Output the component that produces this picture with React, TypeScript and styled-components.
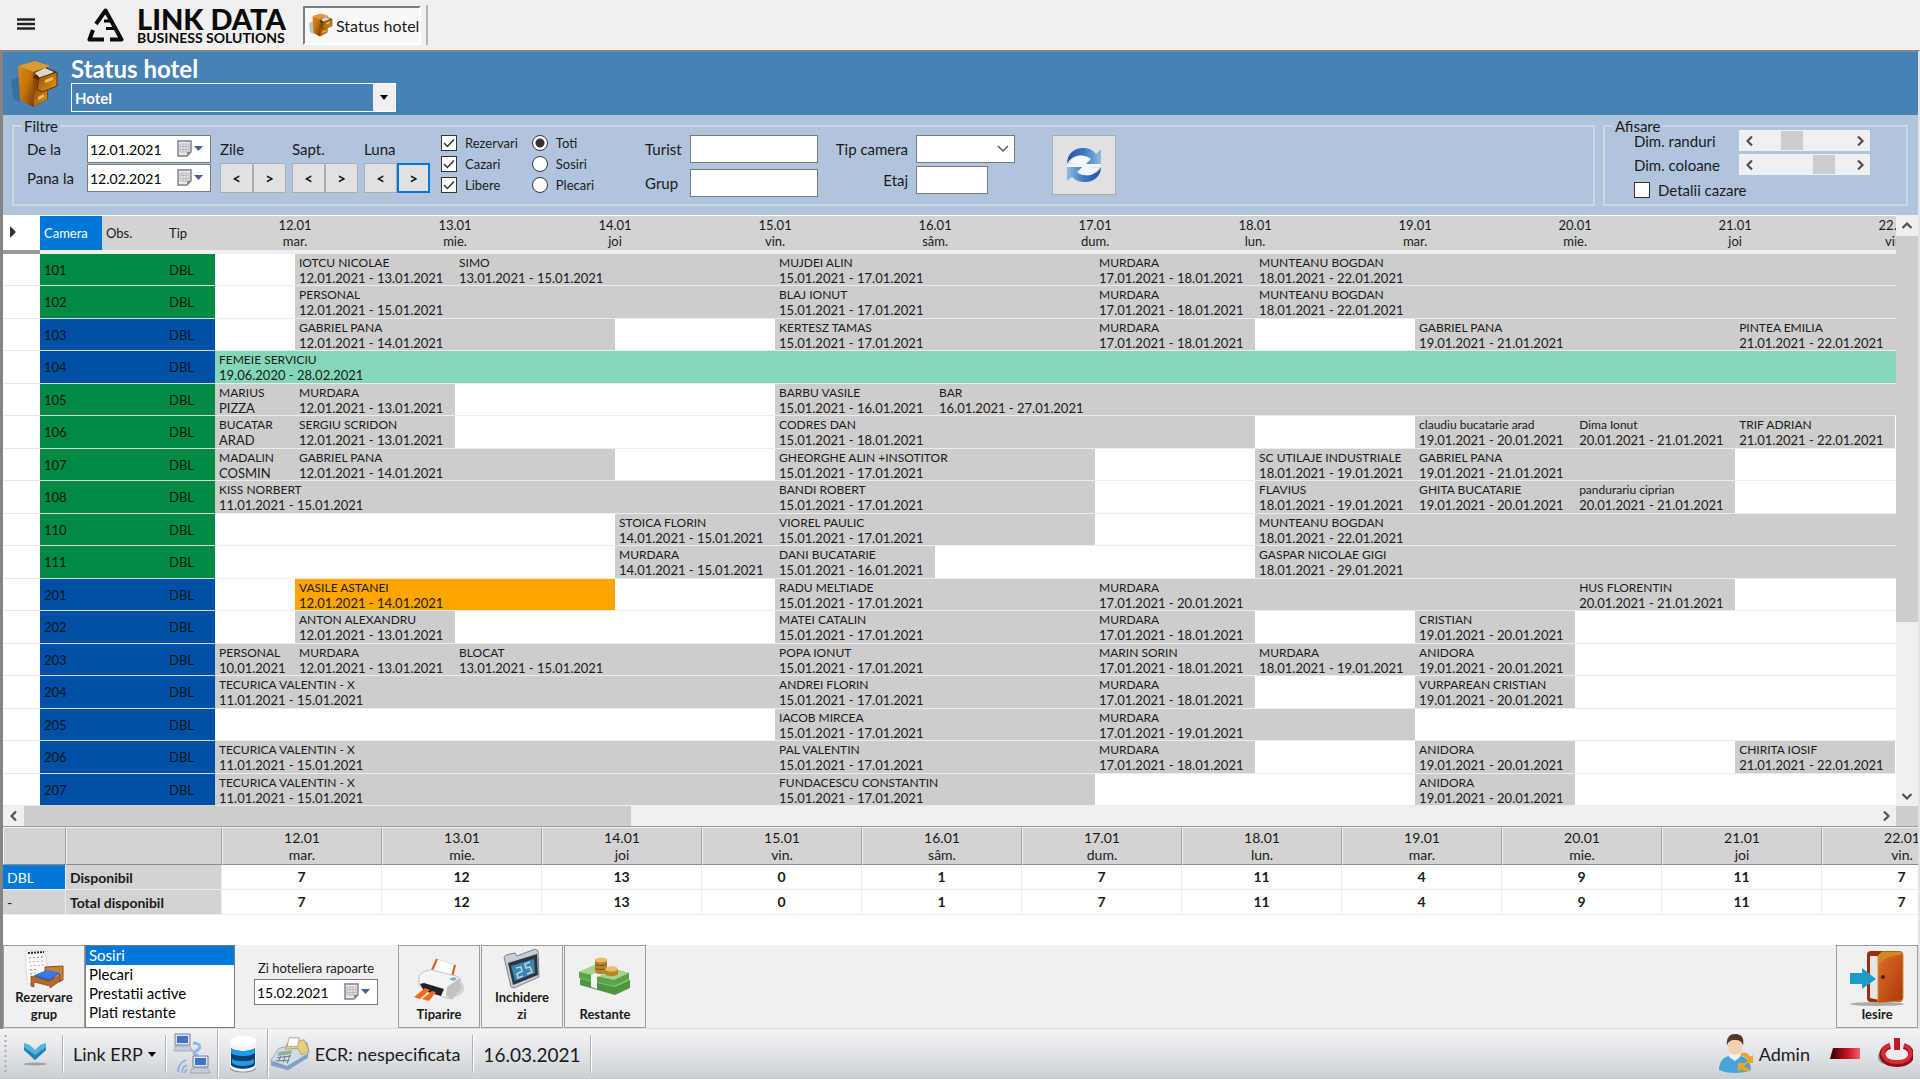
import React from "react";
import styled, { createGlobalStyle, css } from "styled-components";

const GlobalStyle = createGlobalStyle`
  * { box-sizing: border-box; }
  body { margin: 0; background: #f0f0f0; color: #1a1a1a; overflow: hidden; }
  body, button, input, select { font-family: Lato, "Open Sans", sans-serif; }
  button { padding: 0; color: inherit; cursor: pointer; }
  table { border-collapse: separate; border-spacing: 0; table-layout: fixed; }
  th, td { padding: 0; font-weight: 400; }
`;

/* ---------- frame ---------- */

const Page = styled.div`
  display: flex;
  flex-direction: column;
  min-height: 100vh;
`;

const TopBar = styled.header`
  display: flex;
  align-items: center;
  height: 50px;
  padding-left: 16px;
`;

const MenuButton = styled.button`
  width: 20px;
  height: 20px;
  border: 0;
  background: none;
`;

const Brand = styled.div`
  display: flex;
  align-items: center;
  gap: 13px;
  width: 204px;
  margin: 0 12px 0 51px;
  color: #0b0b0b;
`;

const BrandText = styled.div`
  display: flex;
  flex-direction: column;
  white-space: nowrap;
`;

const BrandName = styled.span`
  font-size: 29px;
  line-height: 25px;
  font-weight: 900;
`;

const BrandTagline = styled.span`
  font-size: 14px;
  line-height: 14px;
  font-weight: 700;
`;

const Tab = styled.button`
  display: flex;
  align-items: center;
  gap: 3px;
  height: 39px;
  padding: 0 0 0 4px;
  border: 2px solid;
  border-color: #7d7d7d #fff #fff #7d7d7d;
  background: #f8f8f8;
  font-size: 16px;
  white-space: nowrap;
`;

const TabDivider = styled.div`
  width: 2px;
  height: 40px;
  margin-left: 5px;
  background: #b4b4b4;
`;

const Workspace = styled.main`
  display: flex;
  flex: 1;
  flex-direction: column;
  border: solid #858585;
  border-width: 2px 0 0 3px;
  border-right: 2px solid #e3e3e3;
  background: #fff;
  min-width: 0;
`;

/* ---------- title band ---------- */

const TitleBand = styled.section`
  display: flex;
  gap: 12px;
  height: 63px;
  padding: 3px 0 0 8px;
  background: #4682b4;
  color: #fff;
  > svg { margin-top: 5px; }
`;

const TitleColumn = styled.div`
  display: flex;
  flex-direction: column;
`;

const Title = styled.h1`
  margin: 0;
  font-size: 24px;
  line-height: 28px;
  font-weight: 700;
`;

const Combo = styled.div`
  display: grid;
  grid-template-columns: 1fr 22px;
  width: 325px;
  height: 29px;
  border: 1px solid #fff;
`;

const ComboSelect = styled.select`
  grid-area: 1 / 1 / 2 / 3;
  padding: 0 3px;
  border: 0;
  border-radius: 0;
  appearance: none;
  background: transparent;
  color: #fff;
  font-size: 15px;
  font-weight: 700;
`;

const ComboArrow = styled.span`
  display: grid;
  grid-area: 1 / 2;
  place-items: center;
  background: #f0f0f0;
  color: #000;
  pointer-events: none;
`;

/* ---------- filters ---------- */

const FilterBand = styled.section`
  display: flex;
  gap: 8px;
  height: 100px;
  padding: 7px 10px 0 9px;
  background: #b0c4de;
  font-size: 15px;
`;

const Group = styled.fieldset<{ $grow?: boolean }>`
  flex: ${(p) => (p.$grow ? "1" : "0 0 305px")};
  min-width: 0;
  height: 84px;
  margin: 0;
  padding: 0;
  border: 2px solid #cdd7e2;
`;

const Legend = styled.legend`
  margin-left: 8px;
  padding: 0 2px;
  font-size: 15px;
  line-height: 8px;
`;

const FilterRow = styled.div`
  display: flex;
  align-items: flex-start;
  padding: 5px 0 0 13px;
  white-space: nowrap;
`;

const Stack = styled.div<{ $gap?: number; $ml?: number }>`
  display: flex;
  flex-direction: column;
  gap: ${(p) => p.$gap ?? 0}px;
  margin-left: ${(p) => p.$ml ?? 0}px;
`;

const DateField = styled.label<{ $label?: number }>`
  display: grid;
  grid-template-columns: ${(p) => p.$label ?? 60}px 124px;
  align-items: center;
`;

const DateBox = styled.span<{ $tall?: boolean }>`
  display: flex;
  align-items: center;
  width: 124px;
  height: ${(p) => (p.$tall ? 28 : 26)}px;
  padding-right: 6px;
  border: 1px solid #7a7a7a;
  background: #fff;
`;

const DateInput = styled.input`
  flex: 1;
  min-width: 0;
  height: 100%;
  padding: 0 2px;
  border: 0;
  background: none;
  font-size: 14px;
`;

const DateButton = styled.button`
  display: flex;
  align-items: center;
  border: 0;
  background: none;
`;

const StepLabel = styled.span`
  height: 28px;
  line-height: 28px;
`;

const StepRow = styled.div`
  display: flex;
`;

const StepButton = styled.button<{ $active?: boolean }>`
  width: 33px;
  height: 30px;
  border: ${(p) => (p.$active ? "2px solid #0078d7" : "1px solid #adadad")};
  background: #e1e1e1;
  font-size: 15px;
  font-weight: 700;
`;

const Choice = styled.label<{ $large?: boolean }>`
  display: flex;
  align-items: center;
  gap: 8px;
  height: ${(p) => (p.$large ? 24 : 16)}px;
  font-size: ${(p) => (p.$large ? 15 : 13)}px;
`;

const Tick = styled.input`
  width: 16px;
  height: 16px;
  margin: 0;
  border: 1px solid #333;
  appearance: none;
  background: #fff;
  &[type="radio"] {
    border-radius: 50%;
  }
  &[type="radio"]:checked {
    background: radial-gradient(circle, #333 0 4px, #fff 5px);
  }
  &[type="checkbox"]:checked {
    background: #fff
      url("data:image/svg+xml,%3Csvg xmlns='http://www.w3.org/2000/svg' viewBox='0 0 14 14'%3E%3Cpath d='M2 7l3.4 3.5L12 3.5' fill='none' stroke='%23333' stroke-width='1.5'/%3E%3C/svg%3E");
  }
`;

const TextField = styled.label<{ $label: number; $right?: boolean }>`
  display: grid;
  grid-template-columns: ${(p) => p.$label}px auto;
  align-items: center;
  justify-content: start;
  span {
    text-align: ${(p) => (p.$right ? "right" : "left")};
    padding-right: ${(p) => (p.$right ? 8 : 0)}px;
  }
`;

const TextInput = styled.input<{ $w: number }>`
  width: ${(p) => p.$w}px;
  height: 28px;
  border: 1px solid #7a7a7a;
  background: #fff;
`;

const RoomSelect = styled.select`
  width: 99px;
  height: 28px;
  border: 1px solid #7a7a7a;
  border-radius: 0;
  appearance: none;
  background: #fff
    url("data:image/svg+xml,%3Csvg xmlns='http://www.w3.org/2000/svg' width='12' height='8'%3E%3Cpath d='M1 1l5 5 5-5' fill='none' stroke='%23555' stroke-width='1.4'/%3E%3C/svg%3E")
    no-repeat right 5px center;
`;

const RefreshButton = styled.button`
  display: grid;
  place-items: center;
  width: 64px;
  height: 60px;
  margin-left: 37px;
  border: 1px solid #adadad;
  background: #e1e1e1;
`;

const DisplayGrid = styled.div`
  display: flex;
  flex-direction: column;
  gap: 3px;
  padding-left: 29px;
`;

const SliderRow = styled.div`
  display: grid;
  grid-template-columns: 105px 131px;
  align-items: center;
  height: 21px;
`;

const Slider = styled.div`
  display: flex;
  height: 21px;
  background: #f0f0f0;
`;

const Range = styled.input`
  flex: 1;
  min-width: 0;
  height: 21px;
  margin: 0;
  appearance: none;
  background: none;
  &::-webkit-slider-thumb {
    appearance: none;
    width: 22px;
    height: 19px;
    background: #cdcdcd;
  }
`;

const ArrowButton = styled.button`
  display: grid;
  flex: 0 0 21px;
  place-items: center;
  min-height: 20px;
  border: 0;
  background: #f0f0f0;
`;

/* ---------- planning ---------- */

const Planner = styled.section`
  display: flex;
  height: 591px;
`;

const PlannerView = styled.div`
  flex: 1;
  min-width: 0;
  overflow: hidden;
`;

const PlanTable = styled.table`
  width: 1972px;
  font-size: 13px;
  tbody tr { height: 32px; }
  tbody tr:nth-child(even) { height: 33px; }
`;

const PlanHead = styled.th<{ $kind?: "marker" | "selected" | "side" }>`
  height: 39px;
  border-top: 1px solid #fff;
  border-bottom: 4px solid #f0f0f0;
  background: #d3d3d3;
  line-height: 16px;
  ${(p) => p.$kind && css`text-align: left; padding-left: 4px;`}
  ${(p) => p.$kind === "marker" && css`background: #fff; border-bottom-color: #9a9a9a;`}
  ${(p) => p.$kind === "selected" && css`background: #0078d7; color: #fff;`}
`;

const MarkerCell = styled.td`
  border-bottom: 1px solid #e6e6e6;
  background: #fff;
`;

const RoomCell = styled.td<{ $blue?: boolean }>`
  padding-left: 4px;
  border-bottom: 1px solid #cfdccf;
  background: ${(p) => (p.$blue ? "#0050a8" : "#008a44")};
  color: #061510;
`;

const tones = { grey: "#cdcdcd", mint: "#84d7b8", orange: "#ffa500", free: "#ffffff" };

const StayCell = styled.td<{ $tone: keyof typeof tones }>`
  padding-left: 4px;
  border-bottom: 1px solid #ececec;
  background: ${(p) => tones[p.$tone]};
  vertical-align: top;
`;

const StayText = styled.div`
  padding-top: 1px;
  line-height: 14px;
  white-space: nowrap;
`;

const StayName = styled.div`
  font-size: 12px;
  line-height: 16px;
`;

const VScroll = styled.div`
  display: flex;
  flex: 0 0 22px;
  flex-direction: column;
  background: #f0f0f0;
`;

const VThumb = styled.div`
  flex: 0 0 386px;
  background: #cdcdcd;
`;

const HScroll = styled.div`
  display: flex;
  height: 20px;
  background: #f0f0f0;
`;

const HThumb = styled.div`
  flex: 0 0 607px;
  background: #cdcdcd;
`;

const Spacer = styled.div`
  flex: 1;
`;

const Corner = styled.div`
  flex: 0 0 22px;
  background: #cdcdcd;
`;

/* ---------- availability ---------- */

const Summary = styled.section`
  flex: 1;
  min-height: 119px;
  overflow: hidden;
  border-top: 1px solid #9a9a9a;
  background: #fff;
`;

const SummaryTable = styled.table`
  width: 1979px;
  font-size: 14px;
  tbody tr { height: 25px; }
  thead th {
    height: 38px;
    border-top: 1px solid #f0f0f0;
    border-right: 1px solid #a0a0a0;
    border-left: 1px solid #f4f4f4;
    border-bottom: 1px solid #8c8c8c;
    background: #d3d3d3;
    line-height: 17px;
  }
  td, tbody th { border-right: 1px solid #ececec; border-bottom: 1px solid #ececec; }
  td { font-weight: 700; text-align: center; padding-bottom: 2px; }
  tbody th { padding-left: 4px; background: #d3d3d3; text-align: left; }
  tbody th + th { font-weight: 700; }
`;

const TypeCell = styled.th<{ $selected?: boolean }>`
  ${(p) => p.$selected && css`&&& { background: #0078d7; color: #fff; }`}
`;

/* ---------- action bar ---------- */

const Actions = styled.section`
  display: flex;
  height: 84px;
  background: #f0f0f0;
  border-bottom: 1px solid #dcdcdc;
`;

const ActionButton = styled.button`
  display: flex;
  flex-direction: column;
  align-items: center;
  justify-content: flex-end;
  width: 82px;
  height: 83px;
  padding-bottom: 4px;
  border: 1px solid #9c9c9c;
  background: #f0f0f0;
  font-size: 13px;
  font-weight: 700;
  line-height: 17px;
  & + & { margin-left: 1px; }
`;

const ReportList = styled.select`
  width: 150px;
  height: 83px;
  padding: 0;
  border: 1px solid #7a7a7a;
  border-radius: 0;
  background: #fff;
  font-size: 15px;
  scrollbar-width: none;
  overflow: hidden;
  option {
    height: 19px;
    min-height: 19px;
    padding: 0 3px;
    line-height: 19px;
  }
  option:checked {
    background: #0078d7 linear-gradient(#0078d7, #0078d7);
    -webkit-text-fill-color: #fff;
  }
`;

const ReportDate = styled.label`
  display: flex;
  flex-direction: column;
  gap: 2px;
  margin: 14px 20px 0 19px;
  font-size: 13px;
  line-height: 18px;
  text-align: center;
`;

/* ---------- status bar ---------- */

const StatusBar = styled.footer`
  display: flex;
  align-items: center;
  height: 51px;
  padding: 0 4px;
  border-bottom: 1px solid #fff;
  background: linear-gradient(#f3f4f5, #dfe2e5 55%, #c9ced3);
  font-size: 18px;
  white-space: nowrap;
`;

const StatusDivider = styled.div<{ $full?: boolean }>`
  width: 2px;
  height: ${(p) => (p.$full ? 50 : 38)}px;
  border-left: 1px solid #aeb2b6;
  border-right: 1px solid #fff;
`;

const StatusItem = styled.button<{ $px?: number }>`
  display: flex;
  align-items: center;
  gap: 5px;
  height: 44px;
  padding: 0 ${(p) => p.$px ?? 6}px;
  border: 0;
  background: none;
  font-size: 18px;
`;

const DateStatus = styled(StatusItem)`
  font-size: 19px;
`;

/* ---------- icons ---------- */

const Cabinet = ({ size }: { size: number }) => (
  <svg width={size} height={size} viewBox="0 0 48 48" aria-hidden="true">
    <defs>
      <linearGradient id="cabSide" x1="0" x2="1" y2="1">
        <stop offset="0" stopColor="#d98c17" />
        <stop offset=".5" stopColor="#c67508" />
        <stop offset="1" stopColor="#7a3d04" />
      </linearGradient>
      <linearGradient id="cabFront" x1="0" y1="0" x2="1" y2="1">
        <stop offset="0" stopColor="#8a4a06" />
        <stop offset="1" stopColor="#e39a1e" />
      </linearGradient>
    </defs>
    <path d="M0 20l9-4v27l-7-5z" fill="#1c4a72" opacity=".3" />
    <path d="M7 6L24 1l15 5-17 6z" fill="#dc9a30" />
    <path d="M7 6l15 6v35L9 40z" fill="url(#cabSide)" />
    <path d="M22 12l15-5v32l-15 8z" fill="#8a4b08" />
    <path d="M23 32l13-5v12l-13 7z" fill="url(#cabFront)" />
    <path d="M22 17l14-9 10 4-17 9z" fill="#4a2302" />
    <path d="M24 13l10-5 9 4-13 7z" fill="#ddd6cc" />
    <path d="M28 18l18-6v14l-15 6-5-3z" fill="url(#cabFront)" stroke="#5f3005" />
    <path d="M34 20l8-3v3l-8 3zM27 37l6-3v3l-6 3z" fill="#f2c05a" />
  </svg>
);

const Logo = () => (
  <svg width="37" height="34" viewBox="0 0 37 34" fill="none" stroke="#0b0b0b" strokeWidth="4" strokeLinejoin="round" aria-hidden="true">
    <path d="M9 16L18.500 2.500 34.500 31.500H23" />
    <path d="M6 22L2.500 31.500H17" />
    <path d="M17 13h7M19 20.500h9" strokeWidth="3" />
  </svg>
);

const CalendarDrop = () => (
  <svg width="27" height="18" viewBox="0 0 27 18" aria-hidden="true">
    <path d="M1 1h13v11l-4 4H1z" fill="#e9e9ee" stroke="#7d7d84" strokeWidth="1.400" />
    <path d="M3 4h9v8H3zM3 6.500h9M3 9.500h9M6 4v8M9 4v8" fill="none" stroke="#b4b7c4" />
    <path d="M10 16v-4h4z" fill="#888" />
    <path d="M17 6h9l-4.500 5z" fill="#46618f" />
  </svg>
);

type Dir = "left" | "right" | "up" | "down";
const turns: Record<Dir, number> = { left: 0, up: 90, right: 180, down: 270 };
const Chevron = ({ dir }: { dir: Dir }) => (
  <svg width="12" height="12" viewBox="0 0 12 12" aria-hidden="true">
    <path d="M8 1.500L3.500 6 8 10.500" fill="none" stroke="#505050" strokeWidth="2.200" transform={`rotate(${turns[dir]} 6 6)`} />
  </svg>
);

const RefreshIcon = () => (
  <svg width="36" height="36" viewBox="0 0 36 36" aria-hidden="true">
    <defs>
      <linearGradient id="rfA" x1="0" x2="1">
        <stop offset="0" stopColor="#2350a8" />
        <stop offset=".5" stopColor="#3f77c4" />
        <stop offset="1" stopColor="#8fbbe4" />
      </linearGradient>
      <linearGradient id="rfB" x1="1" x2="0">
        <stop offset="0" stopColor="#2350a8" />
        <stop offset=".5" stopColor="#3f77c4" />
        <stop offset="1" stopColor="#8fbbe4" />
      </linearGradient>
    </defs>
    <path d="M1 17h34v3H1z" fill="#f1f4f9" />
    <path d="M1 17C1 7 8 1 17 1c6 0 10 2 13 6l5-5v15H20l5-5C20 7 6 6 1 17z" fill="url(#rfA)" />
    <path d="M35 20c0 9-7 15-16 15-6 0-10-2-13-5l-5 4V20h15l-5 5c5 5 19 5 24-5z" fill="url(#rfB)" />
    <path d="M4 16C7 9 15 7 21 10l3 3-5 4zM32 21c-3 7-11 9-17 6l-3-2 5-5z" fill="#f4f7fb" />
  </svg>
);

const BedIcon = () => (
  <svg width="44" height="40" viewBox="0 0 44 40" aria-hidden="true">
    <path d="M3 2l20-1 4 29-22 5z" fill="#fbfbfb" stroke="#ddd" />
    <path d="M6 4l16-1" stroke="#222" strokeWidth="2" strokeDasharray="2 1" />
    <path d="M7 9l15-1M8 21l8-1M8 25l5-1M9 29h4" stroke="#888" strokeDasharray="2 2" />
    <path d="M7 13l16-1M8 17l15-1" stroke="#e99" strokeDasharray="2 2" />
    <path d="M23 18l18-1v14l-4 2v-8l-14-3z" fill="#c8803a" stroke="#8a4c16" />
    <path d="M11 27l14-6 13 3-11 9z" fill="#2b62c9" />
    <path d="M9 27l18 5 11-6v6l-10 7v-2l-16-4v5l-3-1z" fill="#b66a28" stroke="#7d4210" strokeWidth=".7" />
    <path d="M13 26l12-5 11 3-8 6z" fill="#3b78e2" />
  </svg>
);

const PrinterIcon = () => (
  <svg width="50" height="50" viewBox="0 -1 50 50" aria-hidden="true">
    <ellipse cx="41" cy="31" rx="9" ry="9" fill="#c2c2c2" opacity=".6" />
    <path d="M19 16L23 2l18 6-3 14z" fill="#fff" stroke="#ddd" />
    <path d="M23 2l-5 11M41 8l-3 12" stroke="#d9591a" strokeWidth="2" />
    <path d="M5 19c2-4 8-6 13-6l24 6c4 1 5 4 5 7l-1 7-8 9-9-2L5 29z" fill="#f4f4f5" stroke="#c2c2c6" />
    <path d="M33 30l13-9v12l-8 9-6-3z" fill="#c0c2c7" />
    <path d="M6 27l4-1 20 6-3 7-17-5z" fill="#222" />
    <path d="M11 31l5 2-10 9-6-2zM18 34l4 1-7 9-7-2z" fill="#f2691b" />
    <path d="M35 22l5-2 3 2-4 2z" fill="#6cb2d0" />
  </svg>
);

const FolderIcon = () => (
  <svg width="38" height="40" viewBox="0 0 38 40" aria-hidden="true">
    <path d="M1 8l2-2 9-2 2 3 18-7 3 2 1 26-25 11-3-1z" fill="#c5ccd5" stroke="#7a838e" />
    <path d="M5 14l29-9 1 21-25 10z" fill="#2c3642" />
    <path d="M8 17l23-7 1 14-20 8z" fill="#3f84ad" />
    <path d="M13 19l5-1 1 4-5 3 1 4 5-2M27 13l-5 2 1 4 4-1 2 5-5 2" fill="none" stroke="#a9d8ea" strokeWidth="1.600" />
  </svg>
);

const MoneyIcon = () => (
  <svg width="54" height="50" viewBox="0 -1 54 50" aria-hidden="true">
    <path d="M2 22l16-8 34 9v8l-15 7L2 28z" fill="#4f9440" />
    <path d="M2 22l16-8 34 9-15 7z" fill="#8cc873" />
    <path d="M1 15l18-8 32 9v6l-15 7L1 21z" fill="#5ba24a" />
    <path d="M1 15l18-8 32 9-15 7z" fill="#a3d68c" />
    <path d="M13 18l17-8 6 2-17 8v12l-6-2z" fill="#f1f3ee" />
    <path d="M17 3v12c2 3 10 3 12 0V3z" fill="#b9822c" />
    <path d="M17 7c2 2 10 2 12 0M17 11c2 2 10 2 12 0" fill="none" stroke="#7d5110" />
    <ellipse cx="23" cy="3" rx="6" ry="2.500" fill="#e5bd62" />
    <path d="M27 12v5c2 3 11 3 13 0v-5z" fill="#b9822c" />
    <ellipse cx="33.500" cy="12" rx="6.500" ry="2.800" fill="#e5bd62" />
  </svg>
);

const DoorIcon = () => (
  <svg width="56" height="56" viewBox="0 0 56 56" aria-hidden="true">
    <defs>
      <linearGradient id="door" x1="0" y1="0" x2="1" y2="1">
        <stop offset="0" stopColor="#e0702a" />
        <stop offset="1" stopColor="#a83808" />
      </linearGradient>
    </defs>
    <ellipse cx="28" cy="54" rx="27" ry="2" fill="#aaa" />
    <rect x="18" y="1" width="36" height="51" rx="4" fill="#9c2f0a" />
    <path d="M21 6h9v44l-9-2z" fill="#e5e5e5" />
    <path d="M29 6l4-4h18c2 0 3 1 3 3v42c0 3-1 4-4 4l-21 2z" fill="url(#door)" stroke="#c9932d" />
    <path d="M30 14V5l4-3h18v3c-8 0-15 2-22 9z" fill="#cf8a22" />
    <circle cx="34" cy="27" r="2" fill="#5a0c06" />
    <path d="M1 23h12v-5l14 11-14 10v-5H1z" fill="#1d9cc8" />
  </svg>
);

const DownIcon = () => (
  <svg width="26" height="26" viewBox="0 0 26 26" aria-hidden="true">
    <path d="M2 2l6 2 5 5 5-5 6-2v7L13 19 2 9z" fill="#54b4de" />
    <path d="M2 6l11 8 11-8v3L13 19 2 9z" fill="#2583b4" />
    <ellipse cx="13" cy="23" rx="12" ry="1.500" fill="#9da2a6" />
  </svg>
);

const NetworkIcon = () => (
  <svg width="38" height="42" viewBox="0 0 38 42" aria-hidden="true">
    <path d="M2 1h15v11H2z" fill="#dfe4ee" stroke="#74809c" />
    <path d="M4 3h11v7H4z" fill="#3f73c4" />
    <path d="M2 13h15l3 5H1z" fill="#c7ccd6" stroke="#8a90a0" strokeWidth=".6" />
    <path d="M20 10c10 1 7 6 3 8s-2 4 2 4" fill="none" stroke="#88b9e6" strokeWidth="3" />
    <path d="M20 23h15v11H20z" fill="#dfe4ee" stroke="#74809c" />
    <path d="M22 25h11v7H22z" fill="#3f73c4" />
    <path d="M19 35h16l2 5H17z" fill="#c7ccd6" stroke="#8a90a0" strokeWidth=".6" />
    <path d="M5 39c0-6 3-10 8-12M9 40c0-4 2-7 5-8M12 40c0-2 1-3 2-4" fill="none" stroke="#88aed6" strokeWidth="1.600" />
  </svg>
);

const DatabaseIcon = () => (
  <svg width="28" height="38" viewBox="0 0 28 38" aria-hidden="true">
    <ellipse cx="14" cy="33" rx="13" ry="4.500" fill="#8d9195" />
    <path d="M1 6v26c3 6 23 6 26 0V6z" fill="#f2f4f6" />
    <path d="M2 13c4 4 20 4 24 0v17c-4 5-20 5-24 0z" fill="#10406f" />
    <path d="M2 13c4 4 20 4 24 0v5c-4 4-20 4-24 0zM3 24c4 3 18 3 22 0v4c-4 4-18 4-22 0z" fill="#1d9bee" />
    <ellipse cx="14" cy="6" rx="13" ry="5" fill="#fff" />
  </svg>
);

const RegisterIcon = () => (
  <svg width="40" height="36" viewBox="0 0 42 36" aria-hidden="true">
    <path d="M1 25l17 5 22-14v6L19 35 1 30z" fill="#7fa2c8" />
    <path d="M1 25L9 12l30-6 2 11-23 14z" fill="#cfdbe6" stroke="#8194a6" strokeWidth=".7" />
    <path d="M18 7l18-4 5 12-8 4-4-7-13 1z" fill="#e7cd7c" stroke="#a98d40" strokeWidth=".7" />
    <path d="M20 1h11l-2 9H18z" fill="#fff" stroke="#9aa" />
    <path d="M9 16l14-2-1 4-14 2z" fill="#8fb08c" />
    <path d="M7 22l15-2M6 25l14 0M11 20l-2 6M16 20l-2 7M21 19l-3 9" stroke="#667a8c" />
  </svg>
);

const UserIcon = () => (
  <svg width="36" height="40" viewBox="0 0 36 40" aria-hidden="true">
    <path d="M1 36c0-9 5-13 10-14h11c6 1 11 5 11 14-8 4-24 4-32 0z" fill="#4aa3d6" />
    <path d="M12 19h9l1 4-5 4-6-4z" fill="#e9f2f8" />
    <ellipse cx="17" cy="12" rx="7" ry="9" fill="#f5cfae" />
    <path d="M9 12C8 3 12 0 17 0s10 2 8 12c-1-5-4-6-8-6s-7 1-8 6z" fill="#54372b" />
    <path d="M23 19c5-1 8 1 9 4l3-2v8h-8l3-3c-2-3-4-4-7-4zM20 29h9l-3 3c2 2 4 3 7 2-2 4-7 4-10 1l-3 3z" fill="#f3a31b" />
  </svg>
);

const MinimizeIcon = () => (
  <svg width="32" height="14" viewBox="0 0 32 14" aria-hidden="true">
    <defs>
      <linearGradient id="mini" x1="0" x2="1">
        <stop offset="0" stopColor="#2a0004" />
        <stop offset=".6" stopColor="#cc1420" />
        <stop offset="1" stopColor="#f4606a" />
      </linearGradient>
    </defs>
    <path d="M4 1h27v11H1z" fill="url(#mini)" />
  </svg>
);

const PowerIcon = () => (
  <svg width="36" height="34" viewBox="0 0 36 34" aria-hidden="true">
    <ellipse cx="16" cy="20" rx="15" ry="9" fill="#444" opacity=".5" />
    <ellipse cx="20" cy="18" rx="13" ry="9" fill="#e9ebee" />
    <path d="M13 9C1 13 3 27 20 27s18-14 7-18" fill="none" stroke="#8d0f16" strokeWidth="6" />
    <path d="M13 8C2 12 4 25 20 25s17-13 7-17" fill="none" stroke="#da2a32" strokeWidth="4" />
    <path d="M17 1h6v12h-6z" fill="#c01a22" />
  </svg>
);

const SmallTriangle = () => (
  <svg width="8" height="5" viewBox="0 0 8 5" aria-hidden="true">
    <path d="M0 0h8L4 5z" fill="#000" />
  </svg>
);

/* ---------- data ---------- */

const days = [
  ["12.01", "mar."], ["13.01", "mie."], ["14.01", "joi"], ["15.01", "vin."], ["16.01", "sâm."], ["17.01", "dum."],
  ["18.01", "lun."], ["19.01", "mar."], ["20.01", "mie."], ["21.01", "joi"], ["22.01", "vin."],
];
const free = [7, 12, 13, 0, 1, 7, 11, 4, 9, 11, 7];

/* A stay: first day, last day, guest, optional second line, optional tone. */
type Stay = [number, number, string, string?, ("mint" | "orange")?];
type Room = { no: string; blue?: boolean; stays: Stay[] };

const FIRST_SLOT_DAY = 12;
const SLOTS = 22;

const rooms: Room[] = [
  { no: "101", stays: [[12, 13, "IOTCU NICOLAE"], [13, 15, "SIMO"], [15, 17, "MUJDEI ALIN"], [17, 18, "MURDARA"], [18, 22, "MUNTEANU BOGDAN"], [22, 23, "", " "]] },
  { no: "102", stays: [[12, 15, "PERSONAL"], [15, 17, "BLAJ IONUT"], [17, 18, "MURDARA"], [18, 22, "MUNTEANU BOGDAN"], [22, 23, "", " "]] },
  { no: "103", blue: true, stays: [[12, 14, "GABRIEL PANA"], [15, 17, "KERTESZ TAMAS"], [17, 18, "MURDARA"], [19, 21, "GABRIEL PANA"], [21, 22, "PINTEA EMILIA"], [22, 23, "", " "]] },
  { no: "104", blue: true, stays: [[11, 23, "FEMEIE SERVICIU", "19.06.2020 - 28.02.2021", "mint"]] },
  { no: "105", stays: [[11, 12, "MARIUS", "PIZZA"], [12, 13, "MURDARA"], [15, 16, "BARBU VASILE"], [16, 27, "BAR"]] },
  { no: "106", stays: [[11, 12, "BUCATAR", "ARAD"], [12, 13, "SERGIU SCRIDON"], [15, 18, "CODRES DAN"], [19, 20, "claudiu bucatarie arad"], [20, 21, "Dima Ionut"], [21, 22, "TRIF ADRIAN"]] },
  { no: "107", stays: [[11, 12, "MADALIN", "COSMIN"], [12, 14, "GABRIEL PANA"], [15, 17, "GHEORGHE ALIN +INSOTITOR"], [18, 19, "SC UTILAJE INDUSTRIALE"], [19, 21, "GABRIEL PANA"]] },
  { no: "108", stays: [[11, 15, "KISS NORBERT"], [15, 17, "BANDI ROBERT"], [18, 19, "FLAVIUS"], [19, 20, "GHITA BUCATARIE"], [20, 21, "pandurariu ciprian"]] },
  { no: "110", stays: [[14, 15, "STOICA FLORIN"], [15, 17, "VIOREL PAULIC"], [18, 22, "MUNTEANU BOGDAN"], [22, 23, "", " "]] },
  { no: "111", stays: [[14, 15, "MURDARA"], [15, 16, "DANI BUCATARIE"], [18, 29, "GASPAR NICOLAE GIGI"]] },
  { no: "201", blue: true, stays: [[12, 14, "VASILE ASTANEI", undefined, "orange"], [15, 17, "RADU MELTIADE"], [17, 20, "MURDARA"], [20, 21, "HUS FLORENTIN"]] },
  { no: "202", blue: true, stays: [[12, 13, "ANTON ALEXANDRU"], [15, 17, "MATEI CATALIN"], [17, 18, "MURDARA"], [19, 20, "CRISTIAN"]] },
  { no: "203", blue: true, stays: [[11, 12, "PERSONAL", "10.01.2021"], [12, 13, "MURDARA"], [13, 15, "BLOCAT"], [15, 17, "POPA IONUT"], [17, 18, "MARIN SORIN"], [18, 19, "MURDARA"], [19, 20, "ANIDORA"]] },
  { no: "204", blue: true, stays: [[11, 15, "TECURICA VALENTIN - X"], [15, 17, "ANDREI FLORIN"], [17, 18, "MURDARA"], [19, 20, "VURPAREAN CRISTIAN"]] },
  { no: "205", blue: true, stays: [[15, 17, "IACOB MIRCEA"], [17, 19, "MURDARA"]] },
  { no: "206", blue: true, stays: [[11, 15, "TECURICA VALENTIN - X"], [15, 17, "PAL VALENTIN"], [17, 18, "MURDARA"], [19, 20, "ANIDORA"], [21, 22, "CHIRITA IOSIF"]] },
  { no: "207", blue: true, stays: [[11, 15, "TECURICA VALENTIN - X"], [15, 17, "FUNDACESCU CONSTANTIN"], [19, 20, "ANIDORA"]] },
];

/* Days are two half-day slots wide; stays begin at the middle of a day. */
const slotOf = (day: number) => Math.min(SLOTS, Math.max(0, 1 + 2 * (day - FIRST_SLOT_DAY)));

const RoomRow = ({ room }: { room: Room }) => {
  const cells: React.ReactNode[] = [];
  let at = 0;
  room.stays.forEach(([from, to, guest, second, tone]) => {
    const start = slotOf(from);
    const end = slotOf(to);
    if (start > at) cells.push(<StayCell key={`f${at}`} $tone="free" colSpan={start - at} />);
    cells.push(
      <StayCell key={start} $tone={tone ?? "grey"} colSpan={end - start}>
        <StayText>
          <StayName>{guest}</StayName>
          {second ?? `${from}.01.2021 - ${to}.01.2021`}
        </StayText>
      </StayCell>,
    );
    at = end;
  });
  if (at < SLOTS) cells.push(<StayCell key="end" $tone="free" colSpan={SLOTS - at} />);
  return (
    <tr>
      <MarkerCell />
      <RoomCell $blue={room.blue}>{room.no}</RoomCell>
      <RoomCell $blue={room.blue} />
      <RoomCell $blue={room.blue}>DBL</RoomCell>
      {cells}
    </tr>
  );
};

const DatePicker = ({ value, tall }: { value: string; tall?: boolean }) => (
  <DateBox $tall={tall}>
    <DateInput defaultValue={value} />
    <DateButton aria-label="Calendar"><CalendarDrop /></DateButton>
  </DateBox>
);

const Stepper = ({ label, gap, active }: { label: string; gap: number; active?: boolean }) => (
  <Stack $ml={gap}>
    <StepLabel>{label}</StepLabel>
    <StepRow>
      <StepButton>&lt;</StepButton>
      <StepButton $active={active}>&gt;</StepButton>
    </StepRow>
  </Stack>
);

const SizeSlider = ({ label, value }: { label: string; value: number }) => (
  <SliderRow>
    <span>{label}</span>
    <Slider>
      <ArrowButton aria-label="Mai mic"><Chevron dir="left" /></ArrowButton>
      <Range type="range" aria-label={label} defaultValue={value} />
      <ArrowButton aria-label="Mai mare"><Chevron dir="right" /></ArrowButton>
    </Slider>
  </SliderRow>
);

export default function App() {
  return (
    <Page>
      <GlobalStyle />
      <TopBar>
        <MenuButton aria-label="Meniu">
          <svg width="18" height="12" viewBox="0 0 18 12"><path d="M0 1.500h18M0 6h18M0 10.500h18" stroke="#222" strokeWidth="2.400" /></svg>
        </MenuButton>
        <Brand>
          <Logo />
          <BrandText>
            <BrandName>LINK DATA</BrandName>
            <BrandTagline>BUSINESS SOLUTIONS</BrandTagline>
          </BrandText>
        </Brand>
        <Tab><Cabinet size={24} />Status hotel</Tab>
        <TabDivider />
      </TopBar>

      <Workspace>
        <TitleBand>
          <Cabinet size={48} />
          <TitleColumn>
            <Title>Status hotel</Title>
            <Combo>
              <ComboArrow><SmallTriangle /></ComboArrow>
              <ComboSelect aria-label="Unitate"><option>Hotel</option></ComboSelect>
            </Combo>
          </TitleColumn>
        </TitleBand>

        <FilterBand>
          <Group $grow>
            <Legend>Filtre</Legend>
            <FilterRow>
              <Stack $gap={1}>
                <DateField><span>De la</span><DatePicker value="12.01.2021" tall /></DateField>
                <DateField><span>Pana la</span><DatePicker value="12.02.2021" tall /></DateField>
              </Stack>
              <Stepper label="Zile" gap={9} />
              <Stepper label="Sapt." gap={6} />
              <Stepper label="Luna" gap={6} active />
              <Stack $gap={5} $ml={11}>
                {["Rezervari", "Cazari", "Libere"].map((t) => (
                  <Choice key={t}><Tick type="checkbox" defaultChecked />{t}</Choice>
                ))}
              </Stack>
              <Stack $gap={5} $ml={14}>
                {["Toti", "Sosiri", "Plecari"].map((t, i) => (
                  <Choice key={t}><Tick type="radio" name="turisti" defaultChecked={i === 0} />{t}</Choice>
                ))}
              </Stack>
              <Stack $gap={6} $ml={51}>
                <TextField $label={45}><span>Turist</span><TextInput $w={128} /></TextField>
                <TextField $label={45}><span>Grup</span><TextInput $w={128} /></TextField>
              </Stack>
              <Stack $gap={3} $ml={10}>
                <TextField $label={88} $right><span>Tip camera</span><RoomSelect /></TextField>
                <TextField $label={88} $right><span>Etaj</span><TextInput $w={72} /></TextField>
              </Stack>
              <RefreshButton aria-label="Actualizare"><RefreshIcon /></RefreshButton>
            </FilterRow>
          </Group>
          <Group>
            <Legend>Afisare</Legend>
            <DisplayGrid>
              <SizeSlider label="Dim. randuri" value={32} />
              <SizeSlider label="Dim. coloane" value={79} />
              <Choice $large><Tick type="checkbox" />Detalii cazare</Choice>
            </DisplayGrid>
          </Group>
        </FilterBand>

        <Planner>
          <PlannerView>
            <PlanTable>
              <colgroup>
                <col style={{ width: 37 }} />
                <col style={{ width: 62 }} />
                <col style={{ width: 63 }} />
                <col style={{ width: 50 }} />
                {Array.from({ length: SLOTS }, (_, i) => <col key={i} style={{ width: 80 }} />)}
              </colgroup>
              <thead>
                <tr>
                  <PlanHead $kind="marker">
                    <svg width="12" height="12" viewBox="0 0 12 12"><path d="M3 0l6 6-6 6z" fill="#333" /></svg>
                  </PlanHead>
                  <PlanHead $kind="selected">Camera</PlanHead>
                  <PlanHead $kind="side">Obs.</PlanHead>
                  <PlanHead $kind="side">Tip</PlanHead>
                  {days.map(([d, w]) => <PlanHead key={d} colSpan={2}>{d}<br />{w}</PlanHead>)}
                </tr>
              </thead>
              <tbody>{rooms.map((r) => <RoomRow key={r.no} room={r} />)}</tbody>
            </PlanTable>
          </PlannerView>
          <VScroll>
            <ArrowButton aria-label="Sus"><Chevron dir="up" /></ArrowButton>
            <VThumb />
            <Spacer />
            <ArrowButton aria-label="Jos"><Chevron dir="down" /></ArrowButton>
          </VScroll>
        </Planner>
        <HScroll>
          <ArrowButton aria-label="Stanga"><Chevron dir="left" /></ArrowButton>
          <HThumb />
          <Spacer />
          <ArrowButton aria-label="Dreapta"><Chevron dir="right" /></ArrowButton>
          <Corner />
        </HScroll>

        <Summary>
          <SummaryTable>
            <colgroup>
              <col style={{ width: 63 }} />
              <col style={{ width: 156 }} />
              {days.map(([d]) => <col key={d} style={{ width: 160 }} />)}
            </colgroup>
            <thead>
              <tr><th /><th />{days.map(([d, w]) => <th key={d}>{d}<br />{w}</th>)}</tr>
            </thead>
            <tbody>
              <tr><TypeCell $selected>DBL</TypeCell><th>Disponibil</th>{free.map((n, i) => <td key={i}>{n}</td>)}</tr>
              <tr><TypeCell>-</TypeCell><th>Total disponibil</th>{free.map((n, i) => <td key={i}>{n}</td>)}</tr>
            </tbody>
          </SummaryTable>
        </Summary>

        <Actions>
          <ActionButton><BedIcon />Rezervare<br />grup</ActionButton>
          <ReportList size={4} aria-label="Rapoarte" defaultValue="Sosiri">
            {["Sosiri", "Plecari", "Prestatii active", "Plati restante"].map((t) => <option key={t}>{t}</option>)}
          </ReportList>
          <ReportDate>Zi hoteliera rapoarte<DatePicker value="15.02.2021" /></ReportDate>
          <ActionButton><PrinterIcon />Tiparire</ActionButton>
          <ActionButton><FolderIcon />Inchidere<br />zi</ActionButton>
          <ActionButton><MoneyIcon />Restante</ActionButton>
          <Spacer />
          <ActionButton><DoorIcon />Iesire</ActionButton>
        </Actions>
      </Workspace>

      <StatusBar>
        <svg width="4" height="38" viewBox="0 0 4 38" aria-hidden="true"><path d="M1.500 0v38" stroke="#aaa" strokeWidth="2" strokeDasharray="2 3" /></svg>
        <StatusItem $px={14} aria-label="Extinde"><DownIcon /></StatusItem>
        <StatusDivider />
        <StatusItem $px={9}>Link ERP <SmallTriangle /></StatusItem>
        <StatusDivider />
        <StatusItem aria-label="Retea"><NetworkIcon /></StatusItem>
        <StatusDivider $full />
        <StatusItem $px={10} aria-label="Baza de date"><DatabaseIcon /></StatusItem>
        <StatusDivider $full />
        <StatusItem $px={1}><RegisterIcon />ECR: nespecificata</StatusItem>
        <Stack $ml={11}><StatusDivider /></Stack>
        <DateStatus $px={9}>16.03.2021</DateStatus>
        <StatusDivider />
        <Spacer />
        <StatusItem><UserIcon />Admin</StatusItem>
        <StatusItem $px={13} aria-label="Minimizare"><MinimizeIcon /></StatusItem>
        <StatusItem $px={3} aria-label="Oprire"><PowerIcon /></StatusItem>
      </StatusBar>
    </Page>
  );
}
